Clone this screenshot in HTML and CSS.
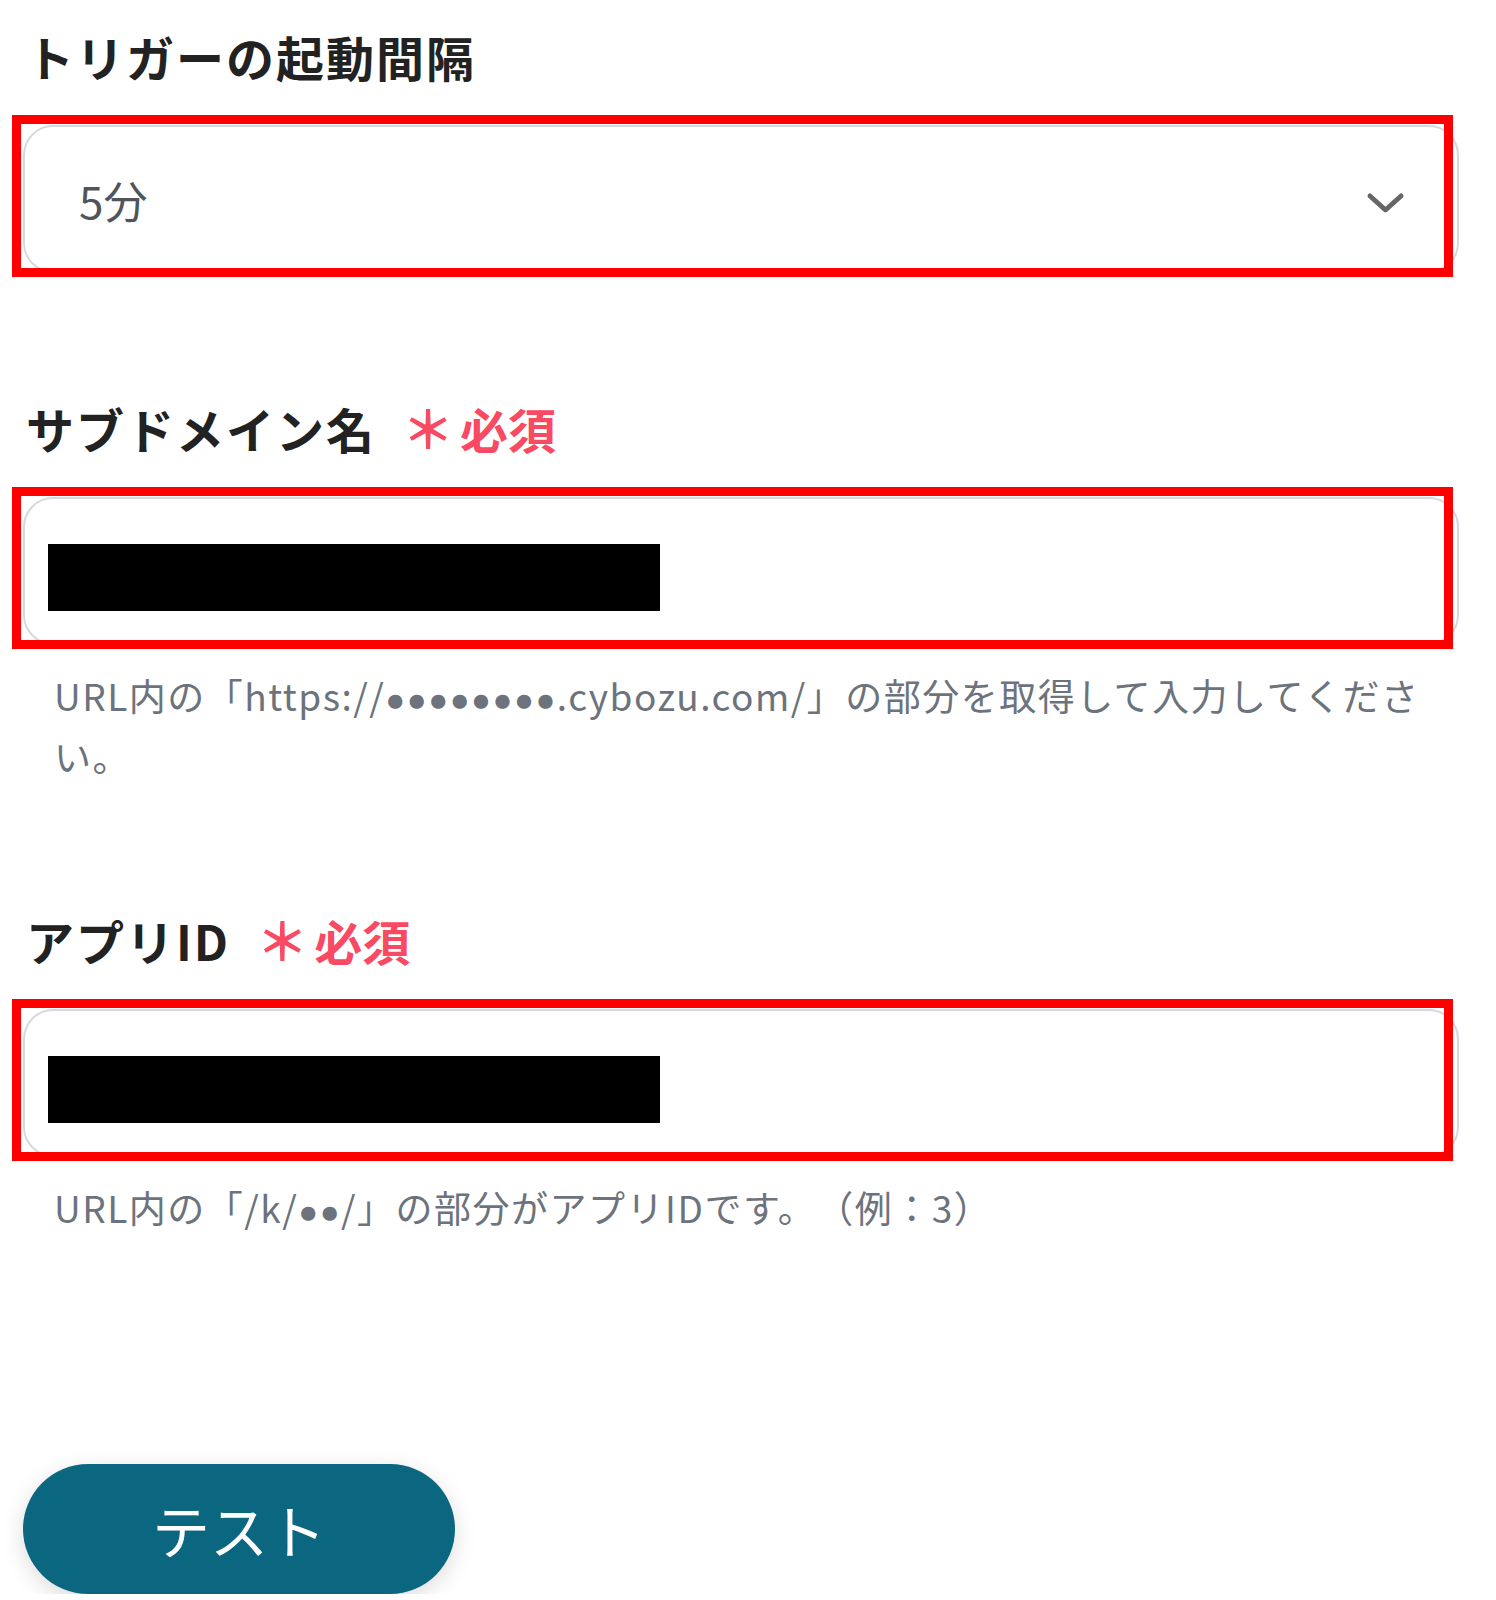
FILE: index.html
```html
<!DOCTYPE html>
<html lang="ja">
<head>
    <meta charset="UTF-8">
    <meta name="viewport" content="width=device-width, initial-scale=1.0">
    <title>トリガー設定</title>
    <link rel="stylesheet" href="styles.css">
</head>
<body>
    <div class="settings-form">
        <div class="field field-first">
            <h2 class="field-label">トリガーの起動間隔</h2>
            <div class="input-box select-box marked">
                <span class="select-value">5分</span>
                <svg class="chevron" width="39" height="22" viewBox="0 0 39 22">
                    <polyline points="4,4 19.5,18 35,4" fill="none" stroke="#666" stroke-width="5" stroke-linecap="round" stroke-linejoin="round"/>
                </svg>
            </div>
        </div>

        <div class="field">
            <h2 class="field-label">サブドメイン名<span class="required"><span class="asterisk">＊</span>必須</span></h2>
            <div class="input-box marked">
                <span class="redacted"></span>
            </div>
            <p class="field-help">URL内の「https://<span class="dots">●●●●●●●●</span>.cybozu.com/」の部分を取得して入力してくださ<br>い。</p>
        </div>

        <div class="field">
            <h2 class="field-label">アプリID<span class="required"><span class="asterisk">＊</span>必須</span></h2>
            <div class="input-box marked">
                <span class="redacted"></span>
            </div>
            <p class="field-help">URL内の「/k/<span class="dots">●●</span>/」の部分がアプリIDです。（例：3）</p>
        </div>

        <div class="actions">
            <button type="button" class="test-button">テスト</button>
        </div>
    </div>
</body>
</html>
```

FILE: styles.css
```css
body {
    margin: 0;
    background-color: white;
    font-family: 'Noto Sans CJK JP', 'Noto Sans', sans-serif;
    color: #222;
}

/* Form column */
.settings-form {
    width: 1436px;
    padding: 20px 0 0 23px;
}

.field {
    margin-top: 118px;
}
.field-first {
    margin-top: 0;
}

.field-label {
    margin: 0 0 33px 3px;
    font-size: 48px;
    font-weight: 700;
    line-height: 72px;
    letter-spacing: 2px;
    color: #222;
}

.required {
    margin-left: 26px;
    color: #f84a62;
    letter-spacing: 0;
}
.asterisk {
    margin-right: 6px;
    font-size: 52px;
}

/* Input boxes */
.input-box {
    position: relative;
    display: flex;
    align-items: center;
    height: 148px;
    box-sizing: border-box;
    border: 2px solid #d5d9df;
    border-radius: 30px;
    background-color: white;
}

/* red annotation frame drawn over the field */
.input-box.marked::after {
    content: '';
    position: absolute;
    top: -12px;
    left: -13px;
    right: 4px;
    bottom: -6px;
    border: 9px solid #ff0000;
}

.select-box {
    justify-content: space-between;
    padding: 0 52px 0 54px;
}
.select-value {
    font-size: 44px;
    color: #50555c;
    padding-top: 2px;
}
.chevron {
    margin-top: 8px;
}

.redacted {
    display: block;
    width: 612px;
    height: 67px;
    margin: 12px 0 0 23px;
    background-color: #000;
}

.field-help {
    margin: 22px 0 0 31px;
    padding-right: 10px;
    font-size: 37px;
    line-height: 57px;
    letter-spacing: 1.5px;
    text-spacing-trim: space-all;
    color: #6c737c;
}
.dots {
    font-family: 'Liberation Sans', sans-serif;
    font-size: 33px;
}

/* Test button */
.actions {
    margin-top: 224px;
}
.test-button {
    width: 432px;
    height: 130px;
    border: none;
    border-radius: 65px;
    background-color: #0b6680;
    color: white;
    font-family: 'Noto Sans CJK JP', sans-serif;
    font-size: 58px;
    font-weight: 400;
    box-shadow: 0 6px 22px rgba(0, 0, 0, 0.14);
    cursor: pointer;
}
```
